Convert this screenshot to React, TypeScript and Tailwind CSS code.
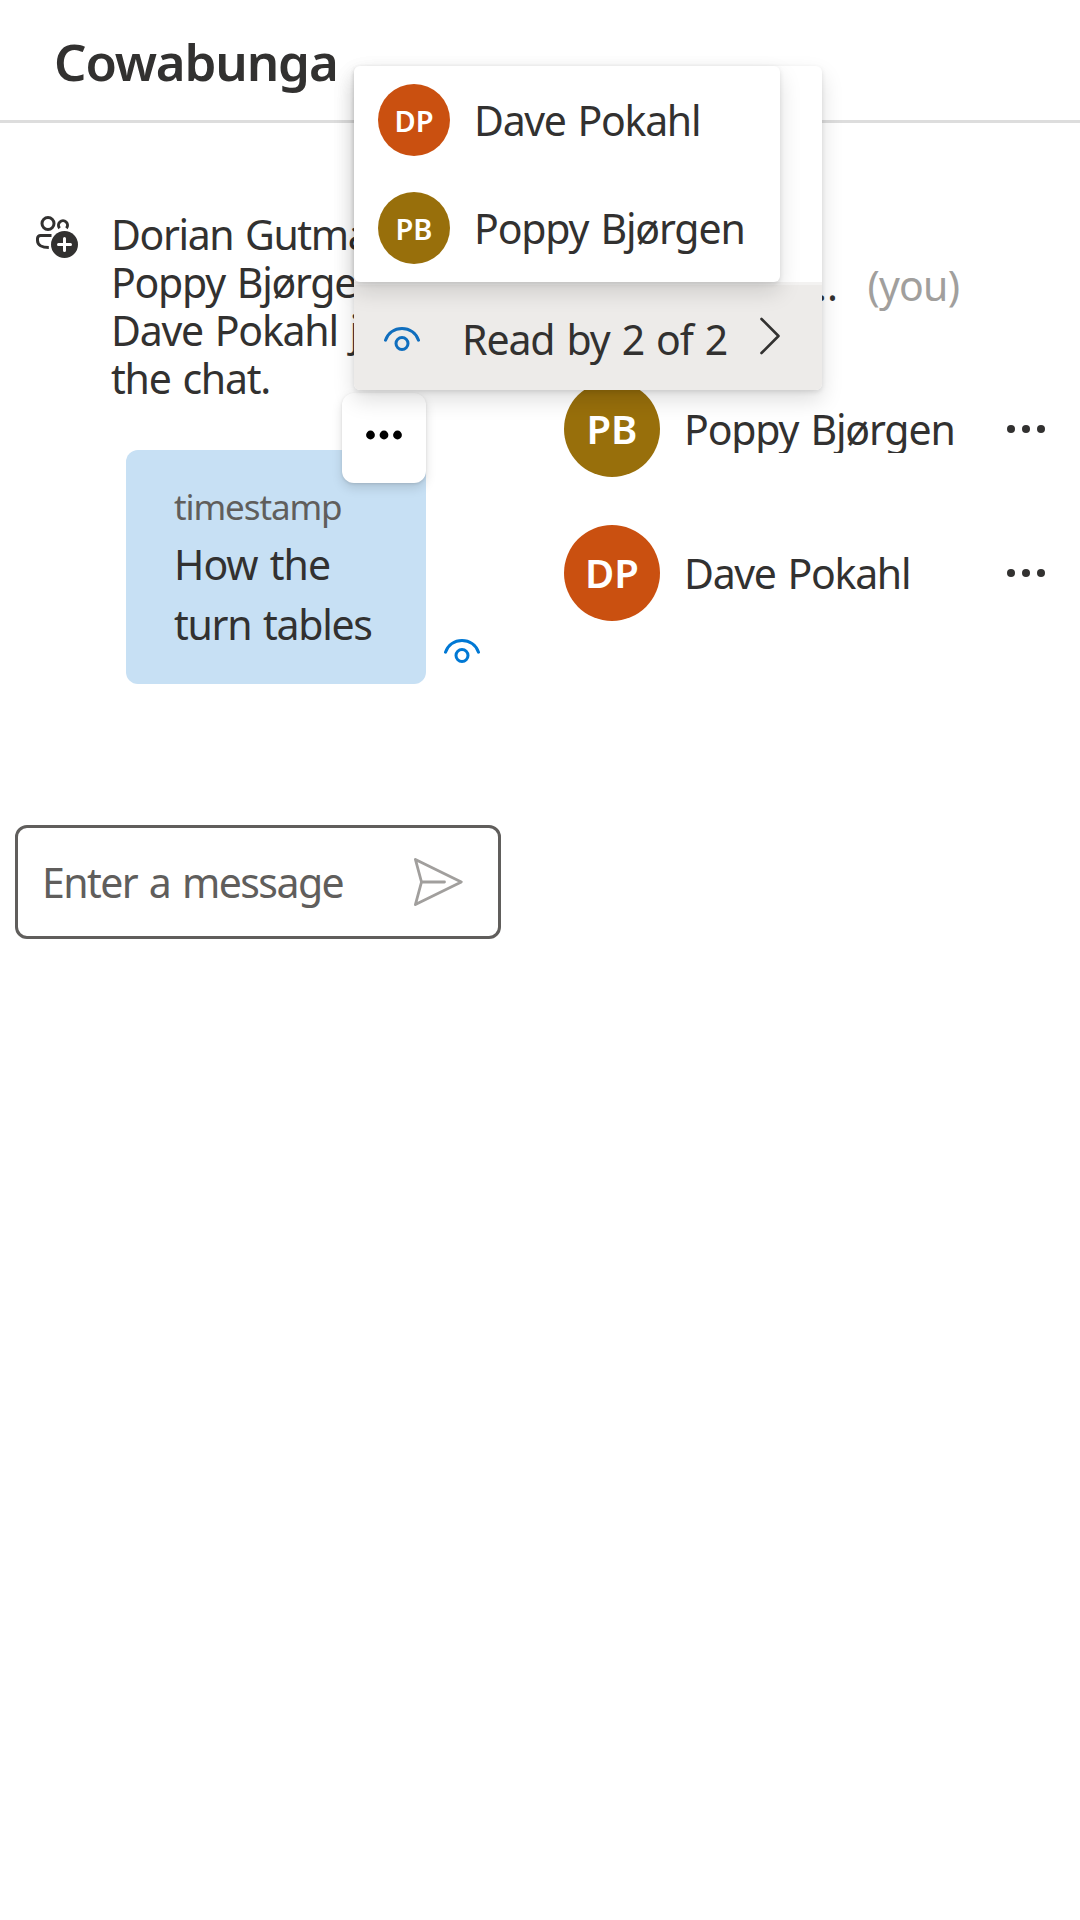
import React from "react";

function EyeIcon({ color }: { color: string }) {
  return (
    <svg width="36" height="24" viewBox="0 0 36 24" fill="none" className="block shrink-0">
      <path d="M1.5 13.2C3.9 6 10.3 1.5 18 1.5S32.100 6 34.5 13.2" stroke={color} strokeWidth="3" strokeLinecap="round" />
      <circle cx="18" cy="16.5" r="6" stroke={color} strokeWidth="3" />
    </svg>
  );
}

function Dots({ gap, r, color }: { gap: number; r: number; color: string }) {
  return (
    <svg width="42" height="12" viewBox="0 0 42 12" fill={color} className="block shrink-0">
      <circle cx={21 - gap} cy="6" r={r} />
      <circle cx="21" cy="6" r={r} />
      <circle cx={21 + gap} cy="6" r={r} />
    </svg>
  );
}

function PeopleAddIcon() {
  return (
    <svg width="42" height="42" viewBox="0 0 42 42" fill="none" className="block shrink-0">
      <circle cx="12" cy="7.500" r="6" stroke="#323130" strokeWidth="3" />
      <path d="M23.600 12.200A4.500 4.500 0 1 1 30.400 12.200" stroke="#323130" strokeWidth="3" />
      <path d="M15.500 19.500H4.500A3 3 0 0 0 1.500 22.500V24.500C1.500 29 6 31.500 12.800 31.500" stroke="#323130" strokeWidth="3" />
      <circle cx="28.500" cy="28.500" r="13.500" fill="#323130" />
      <path d="M28.500 22.500V34.500M22.500 28.500H34.500" stroke="#fff" strokeWidth="3" strokeLinecap="round" />
    </svg>
  );
}

function Participant({ initials, name, bg, tracking }: { initials: string; name: string; bg: string; tracking: string }) {
  return (
    <div className="flex h-36 items-center">
      <div className={`flex h-24 w-24 shrink-0 items-center justify-center rounded-full text-[40px] font-semibold text-white ${bg}`}>
        {initials}
      </div>
      <div className={`ml-6 h-[48px] w-[297px] overflow-hidden whitespace-nowrap leading-[48px] ${tracking}`}>{name}</div>
      <div className="ml-[24px]">
        <Dots gap={15} r={4} color="#323130" />
      </div>
    </div>
  );
}

function Reader({ initials, name, bg, tracking }: { initials: string; name: string; bg: string; tracking: string }) {
  return (
    <div className="flex h-[108px] items-center pl-6">
      <div className={`flex h-[72px] w-[72px] items-center justify-center rounded-full text-[29px] font-semibold text-white ${bg}`}>
        <span className="relative top-px">{initials}</span>
      </div>
      <div className={`ml-6 whitespace-nowrap ${tracking}`}>{name}</div>
    </div>
  );
}

export default function App() {
  return (
    <div className="relative h-[1920px] w-[1080px] overflow-hidden bg-white font-['Noto_Sans','Open_Sans',sans-serif] text-[41px] leading-[54px] text-[#323130] [word-spacing:2.5px]">
      <header className="flex h-[123px] items-center border-b-[3px] border-[#dddddd] pl-[54px] pt-px">
        <h1 className="text-[51px] font-semibold leading-[72px] tracking-[-1.15px]">Cowabunga</h1>
      </header>

      <main className="flex">
        <section className="w-[516px]">
          <div className="flex pl-9 pt-[87px]">
            <div className="pt-[6px]">
              <PeopleAddIcon />
            </div>
            <p className="ml-[33px] whitespace-nowrap leading-[48px] tracking-[-1.25px]">
              <span className="tracking-[-1.4px]">Dorian Gutman,</span>
              <br />
              Poppy Bjørgen,
              <br />
              Dave Pokahl joined
              <br />
              the chat.
            </p>
          </div>

          <div className="mt-[48px] flex items-end pl-[126px]">
            <div className="relative h-[234px] w-[300px] rounded-xl bg-[#c7e0f4] pl-12 pt-[33px]">
              <div className="text-[35px] leading-[48px] tracking-[-1.1px] text-[#605e5c]">timestamp</div>
              <div className="whitespace-nowrap pt-[3px] leading-[60px]">
                <span className="tracking-[-1px]">How the</span>
                <br />
                <span className="tracking-[-1.3px]">turn tables</span>
              </div>
              <div className="absolute -top-[57px] right-0 flex h-[90px] w-[84px] items-center justify-center rounded-xl bg-white pb-[6px] shadow-[0_5px_11px_rgba(0,0,0,0.13),0_1px_3px_rgba(0,0,0,0.11)]">
                <Dots gap={13.500} r={4.400} color="#000000" />
              </div>
            </div>
            <div className="mb-[21px] ml-[18px]">
              <EyeIcon color="#0078d4" />
            </div>
          </div>

          <div className="ml-[15px] mt-[141px] flex h-[114px] w-[486px] items-center rounded-xl border-[3px] border-[#605e5c] pl-6 text-[#605e5c]">
            <span className="w-[370px] whitespace-nowrap tracking-[-1.55px]">Enter a message</span>
            <svg width="51" height="50" viewBox="0 0 51 50" fill="none" stroke="#a19f9d" strokeWidth="2.800" strokeLinejoin="round" strokeLinecap="round" className="shrink-0">
              <path d="M3.400 2.400L49.300 25L3.400 47.600L9.500 25ZM9.500 25H32.500" />
            </svg>
          </div>
        </section>

        <section className="w-[564px] pl-12 pt-[90px]">
          <div className="flex h-36 items-center">
            <div className="h-24 w-24 shrink-0 rounded-full bg-[#038387]" />
            <div className="ml-6 w-[154px] whitespace-nowrap text-right">Doria...</div>
            <div className="ml-[29.5px] tracking-[-0.8px] text-[#a19f9d]">(you)</div>
          </div>
          <Participant initials="PB" name="Poppy Bjørgen" bg="bg-[#986f0b]" tracking="tracking-[-1.15px]" />
          <Participant initials="DP" name="Dave Pokahl" bg="bg-[#ca5010]" tracking="tracking-[-1.3px]" />
        </section>
      </main>

      <div className="absolute left-[354px] top-[66px] h-[324px] w-[468px] rounded-[6px] bg-white shadow-[0_10px_22px_rgba(0,0,0,0.133),0_2px_5px_rgba(0,0,0,0.108)]">
        <div className="flex h-full flex-col justify-end overflow-hidden rounded-[6px]">
          <div className="flex h-[108px] items-center border-t-[3px] border-[#f3f2f1] bg-[#edebe9] pl-[30px]">
            <div className="pt-[3px]">
              <EyeIcon color="#106ebe" />
            </div>
            <span className="ml-[42px] w-[297px] whitespace-nowrap pt-[2px] tracking-[-1.1px]">Read by 2 of 2</span>
            <svg width="22" height="38" viewBox="0 0 22 38" fill="none" stroke="#323130" strokeWidth="2.600" strokeLinecap="round" strokeLinejoin="round" className="mb-[3px] shrink-0">
              <path d="M2.500 2L19.500 19L2.500 36" />
            </svg>
          </div>
        </div>
      </div>

      <div className="absolute left-[354px] top-[66px] w-[426px] rounded-[6px] bg-white shadow-[0_10px_22px_rgba(0,0,0,0.133),0_2px_5px_rgba(0,0,0,0.108)]">
        <Reader initials="DP" name="Dave Pokahl" bg="bg-[#ca5010]" tracking="tracking-[-1.3px]" />
        <Reader initials="PB" name="Poppy Bjørgen" bg="bg-[#986f0b]" tracking="tracking-[-1.15px]" />
      </div>
    </div>
  );
}
